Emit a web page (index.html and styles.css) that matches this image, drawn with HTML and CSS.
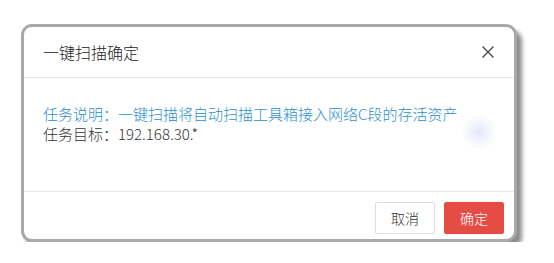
FILE: index.html
```html
<!DOCTYPE html>
<html lang="zh-CN">
<head>
    <meta charset="UTF-8">
    <meta name="viewport" content="width=device-width, initial-scale=1.0">
    <title>一键扫描确定</title>
    <link rel="stylesheet" href="styles.css">
</head>
<body>
    <div class="dialog">
        <!-- Header -->
        <div class="dialog-header">
            <h2>一键扫描确定</h2>
            <button class="close" aria-label="关闭">
                <svg width="14" height="14" viewBox="0 0 14 14">
                    <path d="M1.5 1.5 L12.5 12.5 M12.5 1.5 L1.5 12.5" stroke="#444" stroke-width="1.3" fill="none"/>
                </svg>
            </button>
        </div>

        <!-- Body -->
        <div class="dialog-body">
            <p class="desc">任务说明：一键扫描将自动扫描工具箱接入网络C段的存活资产</p>
            <p>任务目标：192.168.30.*</p>
            <span class="glow"></span>
        </div>

        <!-- Footer -->
        <div class="dialog-footer">
            <button class="btn">取消</button>
            <button class="btn btn-primary">确定</button>
        </div>
    </div>
</body>
</html>
```

FILE: styles.css
```css
/* Global Styles */
:root {
    --primary-color: #e44c44;
    --link-color: #2b8fcc;
    --text-color: #333333;
    --line-color: #e6e6e6;
}

body {
    font-family: "Microsoft YaHei", "Noto Sans CJK SC", sans-serif;
    font-weight: 300;
    margin: 0;
    padding: 24px 0 0 21px;
    background-color: #ffffff;
    color: var(--text-color);
}

.dialog {
    width: 490px;
    height: 212px;
    border: 3px solid #a9a9a9;
    border-radius: 11px;
    background-color: #ffffff;
    box-shadow: 5px 6px 4px rgba(0, 0, 0, 0.45);
    display: flex;
    flex-direction: column;
    overflow: hidden;
}

.dialog-header {
    height: 50px;
    border-bottom: 1px solid var(--line-color);
    display: flex;
    align-items: center;
    justify-content: space-between;
    padding: 0 19px;
}

.dialog-header h2 {
    margin: 0;
    font-size: 16px;
    font-weight: 300;
    color: #222;
}

.close {
    border: none;
    background: none;
    padding: 0;
    width: 14px;
    height: 14px;
    display: flex;
    cursor: pointer;
}

.dialog-body {
    position: relative;
    height: 114px;
    border-bottom: 1px solid var(--line-color);
    padding: 26px 19px 0;
    box-sizing: border-box;
}

.dialog-body p {
    margin: 0;
    font-size: 15px;
    line-height: 20px;
}

.dialog-body .desc {
    color: var(--link-color);
}

.glow {
    position: absolute;
    left: 437px;
    top: 36px;
    width: 36px;
    height: 36px;
    border-radius: 50%;
    background: radial-gradient(circle, rgba(225, 228, 250, 0.9) 0%, rgba(240, 242, 255, 0) 70%);
}

.dialog-footer {
    flex: 1;
    display: flex;
    justify-content: flex-end;
    align-items: flex-start;
    gap: 9px;
    padding: 10px 10px 0;
}

.btn {
    width: 60px;
    height: 32px;
    font-family: inherit;
    font-weight: 300;
    font-size: 14px;
    border: 1px solid #dcdcdc;
    border-radius: 2px;
    background-color: #ffffff;
    color: #333;
    cursor: pointer;
}

.btn-primary {
    background-color: var(--primary-color);
    border-color: var(--primary-color);
    color: #ffffff;
}
```
